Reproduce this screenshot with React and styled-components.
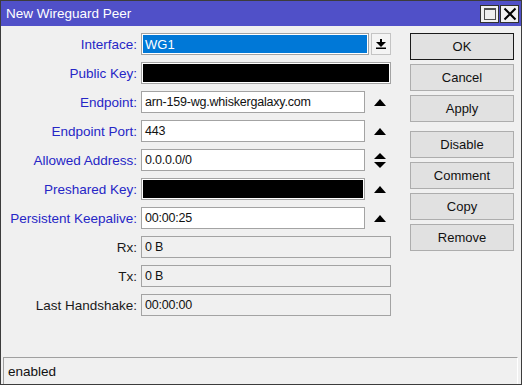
import styled, { createGlobalStyle } from "styled-components"

const GlobalStyle = createGlobalStyle`
    body {
        margin: 0;
        font-family: "Liberation Sans", Arial, sans-serif;
        background: #f0f0f0;
    }
`

const rows = [
    { label: "Interface:", kind: "select", value: "WG1", blue: true },
    { label: "Public Key:", kind: "secret", full: true, blue: true },
    { label: "Endpoint:", kind: "text", value: "arn-159-wg.whiskergalaxy.com", arrow: "up", blue: true },
    { label: "Endpoint Port:", kind: "text", value: "443", arrow: "up", blue: true },
    { label: "Allowed Address:", kind: "text", value: "0.0.0.0/0", arrow: "updown", blue: true },
    { label: "Preshared Key:", kind: "secret", arrow: "up", blue: true },
    { label: "Persistent Keepalive:", kind: "text", value: "00:00:25", arrow: "up", blue: true },
    { label: "Rx:", kind: "readonly", value: "0 B", full: true },
    { label: "Tx:", kind: "readonly", value: "0 B", full: true },
    { label: "Last Handshake:", kind: "readonly", value: "00:00:00", full: true },
]

const buttons = [
    { text: "OK", primary: true },
    { text: "Cancel" },
    { text: "Apply" },
    { text: "Disable", spaced: true },
    { text: "Comment" },
    { text: "Copy" },
    { text: "Remove" },
]

const Arrow = ({ type }) => {
    if (type === "updown") {
        return (
            <svg width="12" height="15" viewBox="0 0 12 15">
                <polygon points="0,6 6,0 12,6" fill="#000" />
                <polygon points="0,9 12,9 6,15" fill="#000" />
            </svg>
        )
    }
    return (
        <svg width="12" height="7" viewBox="0 0 12 7">
            <polygon points="0,7 6,0 12,7" fill="#000" />
        </svg>
    )
}

const FieldFor = ({ row }) => {
    if (row.kind === "select") {
        return (
            <>
                <Field>
                    <Selected>{row.value}</Selected>
                </Field>
                <DropButton>
                    <svg width="10" height="10" viewBox="0 0 10 10">
                        <rect x="4" y="0" width="2" height="3" fill="#000" />
                        <polygon points="0,3 10,3 5,8" fill="#000" />
                        <rect x="0" y="8.5" width="10" height="1.5" fill="#000" />
                    </svg>
                </DropButton>
            </>
        )
    }
    if (row.kind === "secret") {
        return (
            <>
                <Field>
                    <Secret />
                </Field>
                {!row.full && <ArrowCell><Arrow type={row.arrow} /></ArrowCell>}
            </>
        )
    }
    return (
        <>
            <Field $readonly={row.kind === "readonly"}>
                <Value>{row.value}</Value>
            </Field>
            {!row.full && <ArrowCell><Arrow type={row.arrow} /></ArrowCell>}
        </>
    )
}

const App = () => {
    return (
        <>
            <GlobalStyle />
            <Window>
                <TitleBar>
                    <Title>New Wireguard Peer</Title>
                    <TitleButtons>
                        <TitleButton>
                            <MaxBox />
                        </TitleButton>
                        <TitleButton>
                            <svg width="14" height="14" viewBox="0 0 14 14">
                                <path d="M1.5 1.5 L12.5 12.5 M12.5 1.5 L1.5 12.5" stroke="#000" strokeWidth="2" />
                            </svg>
                        </TitleButton>
                    </TitleButtons>
                </TitleBar>
                <Body>
                    <Form>
                        {rows.map((row) => (
                            <Row key={row.label}>
                                <Label $blue={row.blue}>{row.label}</Label>
                                <FieldArea>
                                    <FieldFor row={row} />
                                </FieldArea>
                            </Row>
                        ))}
                    </Form>
                    <Buttons>
                        {buttons.map((b) => (
                            <Button key={b.text} $primary={b.primary} $spaced={b.spaced}>
                                {b.text}
                            </Button>
                        ))}
                    </Buttons>
                </Body>
                <StatusBar>enabled</StatusBar>
            </Window>
        </>
    )
}

export default App

const Window = styled.div`
    width: 522px;
    height: 385px;
    box-sizing: border-box;
    border: 1px solid #3c3c3c;
    background: #f0f0f0;
    display: flex;
    flex-direction: column;
    overflow: hidden;
`

const TitleBar = styled.div`
    height: 25px;
    background: #5050c8;
    display: flex;
    align-items: center;
    justify-content: space-between;
    padding: 0 2px 0 5px;
    flex-shrink: 0;
`

const Title = styled.div`
    color: #ffffff;
    font-size: 13.5px;
`

const TitleButtons = styled.div`
    display: flex;
    gap: 1px;
`

const TitleButton = styled.div`
    width: 19px;
    height: 18px;
    box-sizing: border-box;
    border: 1px solid #303030;
    background: #f0f0f0;
    display: flex;
    align-items: center;
    justify-content: center;
`

const MaxBox = styled.div`
    width: 12px;
    height: 12px;
    box-sizing: border-box;
    border: 1px solid #505050;
    border-top-width: 2px;
`

const Body = styled.div`
    flex: 1;
    display: flex;
    padding-top: 7px;
`

const Form = styled.div`
    display: flex;
    flex-direction: column;
    gap: 7px;
`

const Row = styled.div`
    display: flex;
    height: 22px;
    align-items: center;
`

const Label = styled.div`
    width: 136px;
    padding-right: 4px;
    text-align: right;
    font-size: 13.5px;
    color: ${(p) => (p.$blue ? "#2626c6" : "#1a1a1a")};
    white-space: nowrap;
`

const FieldArea = styled.div`
    width: 250px;
    height: 100%;
    display: flex;
`

const Field = styled.div`
    flex: 1;
    box-sizing: border-box;
    border: 1px solid #a3a3a3;
    background: ${(p) => (p.$readonly ? "#f0f0f0" : "#ffffff")};
    padding: 1px;
    display: flex;
    align-items: center;
`

const Value = styled.span`
    font-size: 12.5px;
    color: #111;
    padding-left: 2px;
    letter-spacing: -0.2px;
`

const Selected = styled.div`
    flex: 1;
    height: 100%;
    background: #0078d7;
    color: #ffffff;
    font-size: 13px;
    display: flex;
    align-items: center;
    padding-left: 2px;
`

const Secret = styled.div`
    flex: 1;
    height: 100%;
    background: #000000;
`

const DropButton = styled.div`
    width: 20px;
    margin-left: 2px;
    box-sizing: border-box;
    border: 1px solid #c4c4c4;
    background: #f4f4f4;
    display: flex;
    align-items: center;
    justify-content: center;
`

const ArrowCell = styled.div`
    width: 23px;
    padding-left: 3px;
    display: flex;
    align-items: center;
    justify-content: center;
`

const Buttons = styled.div`
    margin-left: 19px;
    display: flex;
    flex-direction: column;
    gap: 4px;
`

const Button = styled.div`
    width: 104px;
    height: 27px;
    box-sizing: border-box;
    border: 1px solid ${(p) => (p.$primary ? "#1a1a1a" : "#adadad")};
    background: #e1e1e1;
    font-size: 13px;
    color: #111;
    display: flex;
    align-items: center;
    justify-content: center;
    margin-top: ${(p) => (p.$spaced ? "5px" : "0")};
`

const StatusBar = styled.div`
    height: 27px;
    margin: 0 3px 0 2px;
    box-sizing: border-box;
    border-top: 1px solid #a0a0a0;
    border-left: 1px solid #a0a0a0;
    border-right: 1px solid #ffffff;
    padding-left: 4px;
    display: flex;
    align-items: center;
    font-size: 13.5px;
    color: #111;
`
